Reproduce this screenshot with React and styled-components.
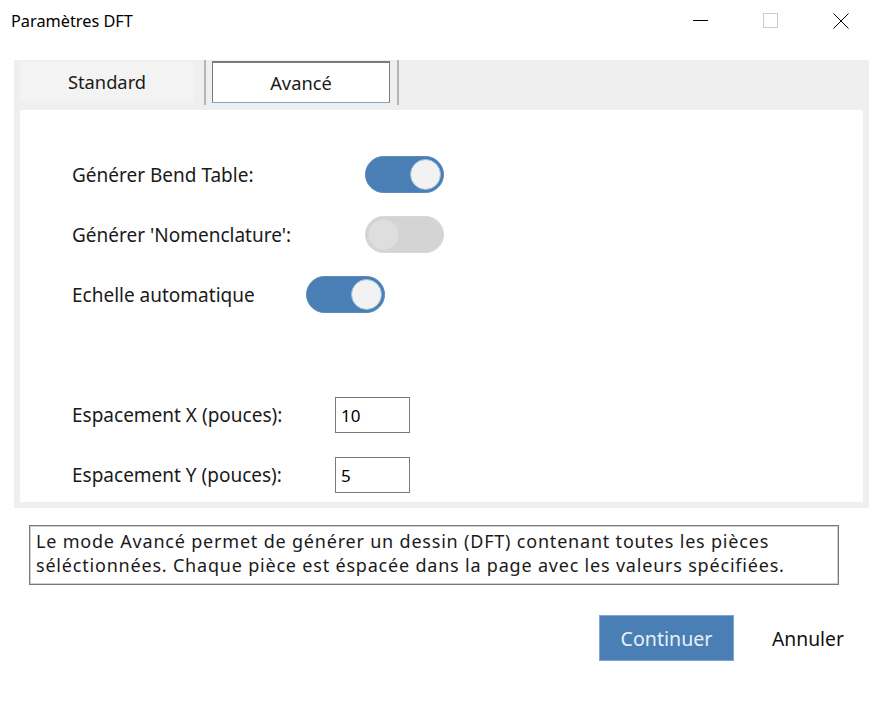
import React from 'react';
import styled, { createGlobalStyle } from 'styled-components';

const GlobalStyle = createGlobalStyle`
  html, body {
    margin: 0;
    padding: 0;
    background: #ffffff;
  }
  body {
    font-family: 'Noto Sans', 'Open Sans', sans-serif;
    color: #000000;
  }
`;

const ACCENT = '#4a7fb5';

const Window = styled.div`
  width: 872px;
  height: 703px;
  display: flex;
  flex-direction: column;
  background: #ffffff;
  overflow: hidden;
`;

const TitleBar = styled.div`
  height: 44px;
  display: flex;
  align-items: center;
  padding-left: 11px;
`;

const Title = styled.span`
  flex: 1;
  font-size: 16.3px;
  margin-top: -2px;
`;

const Controls = styled.div`
  display: flex;
  align-items: center;
  height: 100%;
  margin-right: -4px;
`;

const ControlButton = styled.div`
  width: 70px;
  height: 100%;
  display: flex;
  align-items: center;
  justify-content: center;
  margin-top: -2px;
`;

const TabPanel = styled.div`
  margin: 16px 3px 0 14px;
  background: #efefef;
  display: flex;
  flex-direction: column;
  padding: 0 6px 6px 6px;
`;

const TabStrip = styled.div`
  height: 50px;
  display: flex;
  align-items: flex-start;
`;

const Tab = styled.div`
  box-sizing: border-box;
  height: ${(p) => (p.active ? '42px' : '39px')};
  width: ${(p) => (p.active ? '178px' : '174px')};
  margin-top: ${(p) => (p.active ? '1px' : '2px')};
  display: flex;
  align-items: center;
  justify-content: center;
  font-size: 18.3px;
  color: #1a1a1a;
  background: ${(p) => (p.active ? '#ffffff' : '#f3f3f3')};
  border: ${(p) => (p.active ? '1px solid #7a7a7a' : 'none')};
  border-top-width: ${(p) => (p.active ? '2px' : '0')};
  border-bottom: ${(p) => (p.active ? '1px solid #7ea6d3' : 'none')};
`;

const TabSeparator = styled.div`
  width: 2px;
  height: 45px;
  background: #b5b5b5;
  margin: 0 ${(p) => p.right}px 0 ${(p) => p.left}px;
`;

const Content = styled.div`
  background: #ffffff;
  display: flex;
  flex-direction: column;
  padding: 46px 0 9px 52px;
`;

const ToggleRow = styled.div`
  display: flex;
  align-items: center;
  height: 37px;
  margin-bottom: 23px;
`;

const FieldRow = styled.div`
  display: flex;
  align-items: center;
  height: 36px;
  margin-top: ${(p) => p.top}px;
`;

const Label = styled.span`
  width: ${(p) => p.width}px;
  font-size: 19px;
  color: #1a1a1a;
`;

const Track = styled.div`
  box-sizing: border-box;
  width: 79px;
  height: 37px;
  border-radius: 19px;
  padding: 2px;
  display: flex;
  justify-content: ${(p) => (p.on ? 'flex-end' : 'flex-start')};
  align-items: center;
  background: ${(p) => (p.on ? ACCENT : '#d4d4d4')};
  border: 1px solid ${(p) => (p.on ? '#5b8bbd' : '#d8d8d8')};
`;

const Knob = styled.div`
  box-sizing: border-box;
  width: 31px;
  height: 31px;
  border-radius: 50%;
  background: ${(p) => (p.on ? '#f2f2f2' : '#dedede')};
  border: 1px solid ${(p) => (p.on ? '#9dbbd9' : '#dadada')};
`;

const NumberBox = styled.div`
  box-sizing: border-box;
  width: 75px;
  height: 36px;
  border: 1px solid #7a7a7a;
  display: flex;
  align-items: center;
  padding-left: 5px;
  font-size: 17px;
  color: #000000;
`;

const Description = styled.div`
  box-sizing: border-box;
  margin: 17px 0 0 29px;
  width: 810px;
  height: 60px;
  border: 1px solid #7a7a7a;
  box-shadow: inset 0 0 0 1px #cfcfcf;
  padding: 3px 0 0 6px;
  font-size: 18px;
  line-height: 24px;
  color: #1a1a1a;
  letter-spacing: 0.8px;
  white-space: nowrap;
`;

const Footer = styled.div`
  display: flex;
  align-items: center;
  margin-top: 30px;
  padding-left: 599px;
`;

const PrimaryButton = styled.button`
  width: 135px;
  height: 46px;
  border: 1px solid #7ea6d3;
  background: ${ACCENT};
  color: #e9eff6;
  font-family: inherit;
  font-size: 19.6px;
  padding: 0;
`;

const TextButton = styled.button`
  border: none;
  background: none;
  font-family: inherit;
  font-size: 19.3px;
  color: #111111;
  padding: 0;
  margin-left: 38px;
`;

function Toggle({ on }) {
  return (
    <Track on={on ? 1 : 0}>
      <Knob on={on ? 1 : 0} />
    </Track>
  );
}

export default function App() {
  return (
    <Window>
      <GlobalStyle />
      <TitleBar>
        <Title>Paramètres DFT</Title>
        <Controls>
          <ControlButton>
            <svg width="16" height="16" viewBox="0 0 16 16">
              <line x1="0" y1="7.5" x2="15" y2="7.5" stroke="#000" strokeWidth="1" />
            </svg>
          </ControlButton>
          <ControlButton>
            <svg width="16" height="16" viewBox="0 0 16 16">
              <rect x="0.5" y="0.5" width="14" height="14" fill="none" stroke="#cccccc" strokeWidth="1" />
            </svg>
          </ControlButton>
          <ControlButton>
            <svg width="16" height="16" viewBox="0 0 16 16">
              <path d="M0.5 0.5 L15.5 15.5 M15.5 0.5 L0.5 15.5" stroke="#000" strokeWidth="1" />
            </svg>
          </ControlButton>
        </Controls>
      </TitleBar>

      <TabPanel>
        <TabStrip>
          <Tab>Standard</Tab>
          <TabSeparator left={10} right={6} />
          <Tab active={1}>Avancé</Tab>
          <TabSeparator left={7} right={0} />
        </TabStrip>
        <Content>
          <ToggleRow>
            <Label width={293}>Générer Bend Table:</Label>
            <Toggle on />
          </ToggleRow>
          <ToggleRow>
            <Label width={293}>Générer 'Nomenclature':</Label>
            <Toggle on={false} />
          </ToggleRow>
          <ToggleRow>
            <Label width={234}>Echelle automatique</Label>
            <Toggle on />
          </ToggleRow>
          <FieldRow top={61}>
            <Label width={263}>Espacement X (pouces):</Label>
            <NumberBox>10</NumberBox>
          </FieldRow>
          <FieldRow top={24}>
            <Label width={263}>Espacement Y (pouces):</Label>
            <NumberBox>5</NumberBox>
          </FieldRow>
        </Content>
      </TabPanel>

      <Description>
        Le mode Avancé permet de générer un dessin (DFT) contenant toutes les pièces
        <br />
        séléctionnées. Chaque pièce est éspacée dans la page avec les valeurs spécifiées.
      </Description>

      <Footer>
        <PrimaryButton>Continuer</PrimaryButton>
        <TextButton>Annuler</TextButton>
      </Footer>
    </Window>
  );
}
